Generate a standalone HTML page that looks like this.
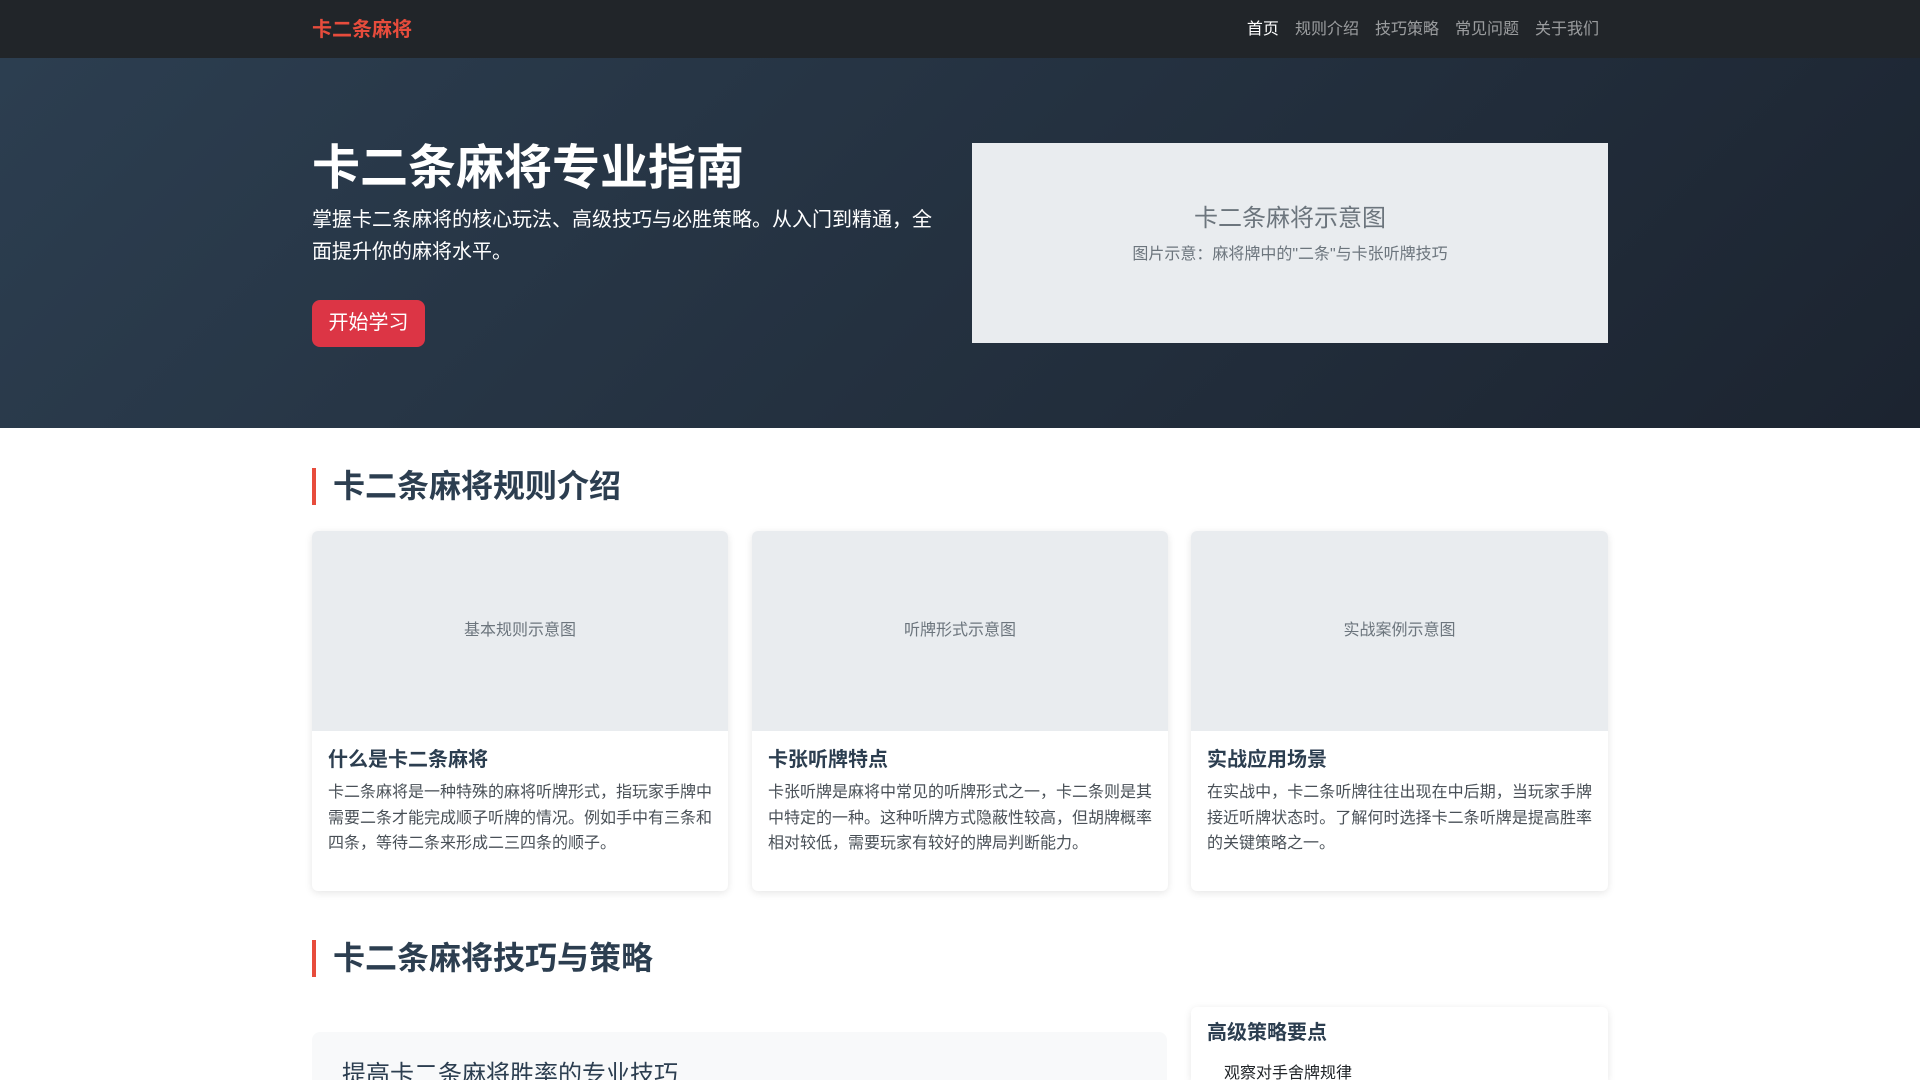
<!DOCTYPE html>
<html><head><meta charset="utf-8"><style>
*{box-sizing:border-box;margin:0;padding:0}
html,body{width:1920px;height:1080px;overflow:hidden}
body{font-family:"Liberation Sans","Noto Sans CJK SC",sans-serif;background:#fff;color:#212529;position:relative}
.nav{height:58px;background:#212529;position:relative}
.brand{position:absolute;left:312px;top:13px;font-size:20px;font-weight:bold;color:#e74c3c}
.links{position:absolute;right:321px;top:15px;font-size:16px;color:rgba(255,255,255,.55)}
.links span{margin-left:16px}
.links span.a{color:#fff}
.hero{position:absolute;top:58px;left:0;width:1920px;height:370px;background:linear-gradient(135deg,#2c3e50,#1c2430)}
h1{position:absolute;left:312px;top:140px;font-size:48px;color:#fff;font-weight:bold;line-height:1.2}
.lead{position:absolute;left:312px;top:204px;width:636px;font-size:20px;line-height:32px;color:#fff}
.btn{position:absolute;left:312px;top:300px;width:113px;height:47px;background:#dc3545;border-radius:8px;color:#fff;font-size:20px;line-height:47px;text-align:center}
.img{position:absolute;left:972px;top:143px;width:636px;height:200px;background:#e9ecef;text-align:center;color:#6c757d}
.img .t{font-size:24px;position:absolute;top:55px;width:100%}
.img .s{font-size:16px;position:absolute;top:97px;width:100%}
.h2{position:absolute;left:312px;border-left:4px solid #e74c3c;padding-left:17px;font-size:32px;font-weight:bold;color:#2c3e50;line-height:37px;height:37px}
.card{position:absolute;top:531px;width:416px;height:360px;background:#fff;border-radius:6px;box-shadow:0 2px 8px rgba(0,0,0,.1);overflow:hidden}
.card .ph{height:200px;background:#e9ecef;color:#6c757d;font-size:16px;text-align:center;line-height:200px}
.card h3{font-size:20px;font-weight:bold;color:#2c3e50;margin:15px 16px 6px;line-height:28px}
.card p{font-size:16px;line-height:25.7px;color:#495057;margin:0 16px;text-align:justify}
.box{position:absolute;left:312px;top:1032px;width:855px;height:48px;background:#f8f9fa;border-radius:8px 8px 0 0;overflow:hidden}
.box div{position:absolute;left:30px;top:22px;font-size:24px;color:#2c3e50}
.side{position:absolute;left:1191px;top:1007px;width:417px;height:73px;background:#fff;border-radius:6px 6px 0 0;box-shadow:0 2px 8px rgba(0,0,0,.1);overflow:hidden}
.side h4{position:absolute;left:16px;top:9px;font-size:20px;font-weight:bold;color:#2c3e50}
.side div{position:absolute;left:33px;top:52px;font-size:16px;color:#212529}
</style></head><body>
<div class="nav"><div class="brand">卡二条麻将</div><div class="links"><span class="a">首页</span><span>规则介绍</span><span>技巧策略</span><span>常见问题</span><span>关于我们</span></div></div>
<div class="hero"></div>
<h1>卡二条麻将专业指南</h1>
<div class="lead">掌握卡二条麻将的核心玩法、高级技巧与必胜策略。从入门到精通，全面提升你的麻将水平。</div>
<div class="btn">开始学习</div>
<div class="img"><div class="t">卡二条麻将示意图</div><div class="s">图片示意：麻将牌中的"二条"与卡张听牌技巧</div></div>
<div class="h2" style="top:468px">卡二条麻将规则介绍</div>
<div class="card" style="left:312px"><div class="ph">基本规则示意图</div><h3>什么是卡二条麻将</h3><p>卡二条麻将是一种特殊的麻将听牌形式，指玩家手牌中需要二条才能完成顺子听牌的情况。例如手中有三条和四条，等待二条来形成二三四条的顺子。</p></div>
<div class="card" style="left:752px"><div class="ph">听牌形式示意图</div><h3>卡张听牌特点</h3><p>卡张听牌是麻将中常见的听牌形式之一，卡二条则是其中特定的一种。这种听牌方式隐蔽性较高，但胡牌概率相对较低，需要玩家有较好的牌局判断能力。</p></div>
<div class="card" style="left:1191px;width:417px"><div class="ph">实战案例示意图</div><h3>实战应用场景</h3><p>在实战中，卡二条听牌往往出现在中后期，当玩家手牌接近听牌状态时。了解何时选择卡二条听牌是提高胜率的关键策略之一。</p></div>
<div class="h2" style="top:940px">卡二条麻将技巧与策略</div>
<div class="box"><div>提高卡二条麻将胜率的专业技巧</div></div>
<div class="side"><h4>高级策略要点</h4><div>观察对手舍牌规律</div></div>
</body></html>
